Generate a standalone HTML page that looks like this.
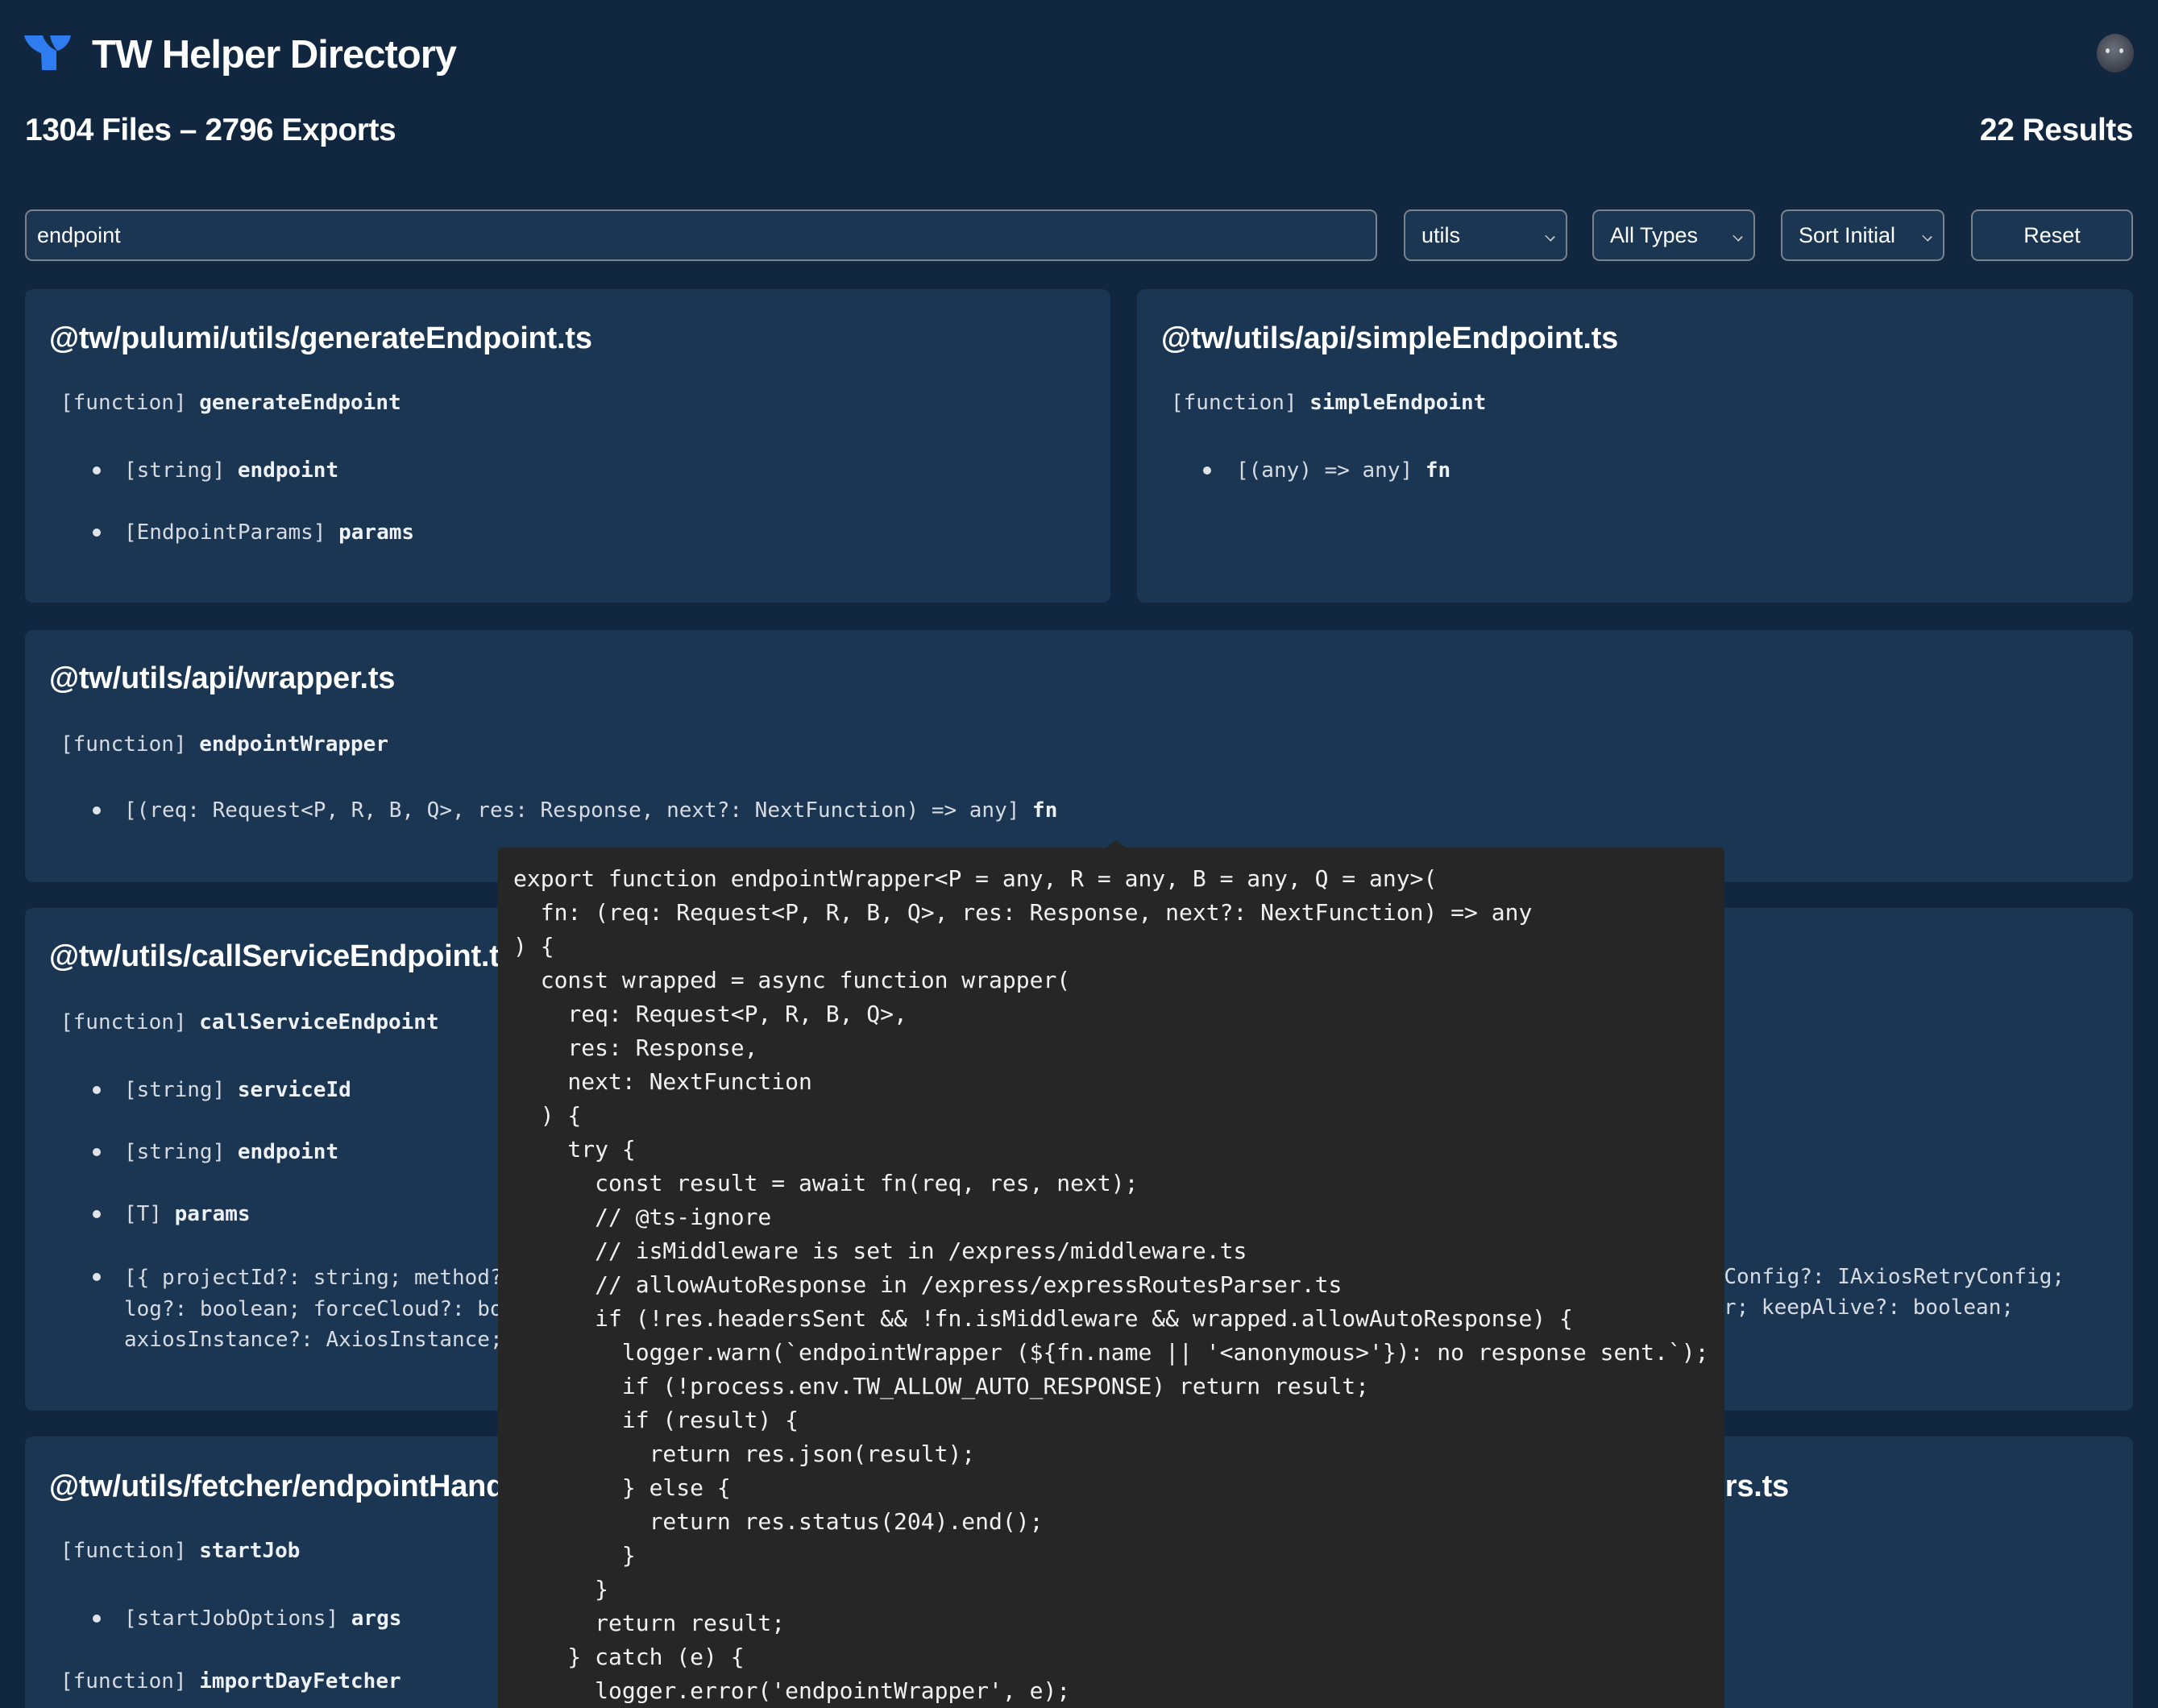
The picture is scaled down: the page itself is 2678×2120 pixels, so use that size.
<!DOCTYPE html>
<html><head><meta charset="utf-8"><style>
*{margin:0;padding:0;box-sizing:border-box}
html,body{width:2678px;height:2120px;overflow:hidden}
body{background:#10273f;position:relative;font-family:"Liberation Sans",Arial,sans-serif;color:#fff}
.a{position:absolute;white-space:pre}
.card{position:absolute;background:#1b3652;border-radius:10px}
.t{position:absolute;font-weight:bold;font-size:38px;line-height:44px;left:61px;color:#fff;letter-spacing:-0.2px;white-space:pre}
.m{position:absolute;font-family:"DejaVu Sans Mono","Liberation Mono",monospace;font-size:26px;line-height:36px;color:#d6dbe2;white-space:pre}
.m b{color:#eef1f5}
.dot{position:absolute;width:10px;height:10px;border-radius:50%;background:#e0e4ea}
.ctl{position:absolute;top:260px;height:64px;border:2px solid #7c828c;border-radius:9px;background:#1b3652;font-size:27px;line-height:60px;color:#fff}
.chev{position:absolute;right:14px;top:26px;width:11px;height:11px;border-right:2px solid #ccc;border-bottom:2px solid #ccc;transform:rotate(45deg) scale(.9,.7)}
.tip{position:absolute;left:618px;top:1052px;width:1522px;height:1068px;background:#262626;border-radius:6px 6px 0 0;padding:18px 0 0 19px;font-family:"DejaVu Sans Mono","Liberation Mono",monospace;font-size:28px;line-height:42px;color:#f2f2f2;white-space:pre;overflow:hidden}
</style></head><body>
<svg class="a" style="left:0;top:0" width="100" height="100" viewBox="0 0 100 100">
<path d="M30,44 L53,44 C56,53 62,59 70,63 L70,87 L52,87 L51,66 C41,62 33,55 30,44 Z" fill="#2f7bf0"/>
<path d="M88,44 C86,54 79,61 71,63 C66,57 63,50 62,44 Z" fill="#2f7bf0"/>
</svg>
<div class="a" style="left:114px;top:38px;font-size:49px;line-height:60px;font-weight:bold;letter-spacing:-1px">TW Helper Directory</div>
<div class="a" style="left:2602px;top:42px;width:46px;height:48px;border-radius:50%;background:radial-gradient(circle at 45% 40%,#6b717c,#3c404a 70%,#2a2d35)"></div>
<div class="a" style="left:2613px;top:60px;width:5px;height:6px;border-radius:50%;background:#ddd"></div>
<div class="a" style="left:2630px;top:60px;width:5px;height:6px;border-radius:50%;background:#ddd"></div>
<div class="a" style="left:31px;top:140px;font-size:39px;line-height:44px;font-weight:bold;letter-spacing:-0.5px">1304 Files – 2796 Exports</div>
<div class="a" style="right:31px;top:140px;font-size:39px;line-height:44px;font-weight:bold;letter-spacing:-0.5px">22 Results</div>

<div class="ctl" style="left:31px;width:1678px;padding-left:13px">endpoint</div>
<div class="ctl" style="left:1742px;width:203px;padding-left:20px">utils<span class="chev"></span></div>
<div class="ctl" style="left:1976px;width:202px;padding-left:20px">All Types<span class="chev"></span></div>
<div class="ctl" style="left:2210px;width:203px;padding-left:20px">Sort Initial<span class="chev"></span></div>
<div class="ctl" style="left:2446px;width:201px;text-align:center">Reset</div>

<div class="card" style="left:31px;top:359px;width:1347px;height:389px"></div>
<div class="t" style="top:398px">@tw/pulumi/utils/generateEndpoint.ts</div>
<div class="m" style="left:75px;top:482px">[function] <b>generateEndpoint</b></div>
<div class="dot" style="left:115px;top:579px"></div><div class="m" style="left:154px;top:566px">[string] <b>endpoint</b></div>
<div class="dot" style="left:115px;top:656px"></div><div class="m" style="left:154px;top:643px">[EndpointParams] <b>params</b></div>

<div class="card" style="left:1411px;top:359px;width:1236px;height:389px"></div>
<div class="t" style="left:1441px;top:398px">@tw/utils/api/simpleEndpoint.ts</div>
<div class="m" style="left:1453px;top:482px">[function] <b>simpleEndpoint</b></div>
<div class="dot" style="left:1493px;top:579px"></div><div class="m" style="left:1534px;top:566px">[(any) =&gt; any] <b>fn</b></div>

<div class="card" style="left:31px;top:782px;width:2616px;height:313px"></div>
<div class="t" style="top:820px">@tw/utils/api/wrapper.ts</div>
<div class="m" style="left:75px;top:906px">[function] <b>endpointWrapper</b></div>
<div class="dot" style="left:115px;top:1001px"></div><div class="m" style="left:154px;top:988px">[(req: Request&lt;P, R, B, Q&gt;, res: Response, next?: NextFunction) =&gt; any] <b>fn</b></div>

<div class="card" style="left:31px;top:1127px;width:2616px;height:624px"></div>
<div class="t" style="top:1165px">@tw/utils/callServiceEndpoint.ts</div>
<div class="m" style="left:75px;top:1251px">[function] <b>callServiceEndpoint</b></div>
<div class="dot" style="left:115px;top:1348px"></div><div class="m" style="left:154px;top:1335px">[string] <b>serviceId</b></div>
<div class="dot" style="left:115px;top:1425px"></div><div class="m" style="left:154px;top:1412px">[string] <b>endpoint</b></div>
<div class="dot" style="left:115px;top:1502px"></div><div class="m" style="left:154px;top:1489px">[T] <b>params</b></div>
<div class="dot" style="left:115px;top:1580px"></div>
<div class="m" style="left:154px;top:1567px;line-height:38.5px">[{ projectId?: string; method?: Method; data?: any
log?: boolean; forceCloud?: boolean; timeout?: numbe
axiosInstance?: AxiosInstance; }]</div>
<div class="m" style="right:116px;top:1567px;text-align:right">ders?: any; retryConfig?: IAxiosRetryConfig;</div>
<div class="m" style="right:179px;top:1605px;text-align:right">ryAfter?: number; keepAlive?: boolean;</div>

<div class="card" style="left:31px;top:1783px;width:2616px;height:337px;border-radius:10px 10px 0 0"></div>
<div class="t" style="top:1823px">@tw/utils/fetcher/endpointHandlers.ts</div>
<div class="m" style="left:75px;top:1907px">[function] <b>startJob</b></div>
<div class="dot" style="left:115px;top:2004px"></div><div class="m" style="left:154px;top:1991px">[startJobOptions] <b>args</b></div>
<div class="m" style="left:75px;top:2069px">[function] <b>importDayFetcher</b></div>

<div class="t" style="left:1900px;top:1823px;width:320px;text-align:right">dpointHandlers.ts</div>

<svg class="a" style="left:1370px;top:1040px" width="30" height="14"><path d="M3,12 L15,3 L27,12 Z" fill="#262626"/></svg>
<div class="tip">export function endpointWrapper&lt;P = any, R = any, B = any, Q = any&gt;(
  fn: (req: Request&lt;P, R, B, Q&gt;, res: Response, next?: NextFunction) =&gt; any
) {
  const wrapped = async function wrapper(
    req: Request&lt;P, R, B, Q&gt;,
    res: Response,
    next: NextFunction
  ) {
    try {
      const result = await fn(req, res, next);
      // @ts-ignore
      // isMiddleware is set in /express/middleware.ts
      // allowAutoResponse in /express/expressRoutesParser.ts
      if (!res.headersSent &amp;&amp; !fn.isMiddleware &amp;&amp; wrapped.allowAutoResponse) {
        logger.warn(`endpointWrapper (${fn.name || '&lt;anonymous&gt;'}): no response sent.`);
        if (!process.env.TW_ALLOW_AUTO_RESPONSE) return result;
        if (result) {
          return res.json(result);
        } else {
          return res.status(204).end();
        }
      }
      return result;
    } catch (e) {
      logger.error('endpointWrapper', e);</div>
</body></html>
